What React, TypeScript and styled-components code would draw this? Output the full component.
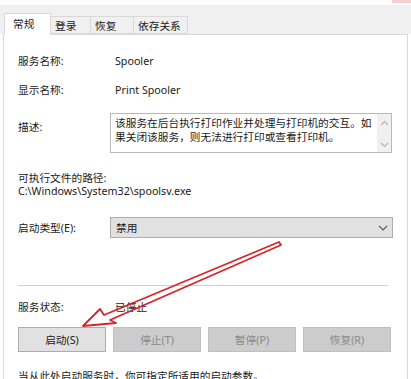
import styled, { createGlobalStyle } from "styled-components";

const GlobalStyle = createGlobalStyle`
  html, body {
    margin: 0;
    padding: 0;
    background: #ffffff;
  }
`;

const FONT = `"Noto Sans", "Noto Sans CJK SC", sans-serif`;

export default function App() {
  return (
    <>
      <GlobalStyle />
      <Page>
        <TopStrip>
          <CloseHint />
        </TopStrip>
        <TabStrip>
          <Tab $active $width={47}>常规</Tab>
          <Tab $width={40}>登录</Tab>
          <Tab $width={43}>恢复</Tab>
          <Tab $width={54}>依存关系</Tab>
        </TabStrip>
        <Panel>
          <Row $top={0}>
            <Label>服务名称:</Label>
            <Value>Spooler</Value>
          </Row>
          <Row $top={15}>
            <Label>显示名称:</Label>
            <Value>Print Spooler</Value>
          </Row>
          <Row $top={16} $alignTop>
            <Label $offset={7}>描述:</Label>
            <TextBox>
              <TextBoxText>
                该服务在后台执行打印作业并处理与打印机的交互。如
                <br />
                果关闭该服务，则无法进行打印或查看打印机。
              </TextBoxText>
              <ScrollBar>
                <svg width="9" height="6" viewBox="0 0 9 6">
                  <polyline points="1,5 4.5,1.5 8,5" fill="none" stroke="#b4b4b4" strokeWidth="1.1" />
                </svg>
                <svg width="9" height="6" viewBox="0 0 9 6">
                  <polyline points="1,1 4.5,4.5 8,1" fill="none" stroke="#b4b4b4" strokeWidth="1.1" />
                </svg>
              </ScrollBar>
            </TextBox>
          </Row>
          <PathLabel>可执行文件的路径:</PathLabel>
          <PathValue>C:\Windows\System32\spoolsv.exe</PathValue>
          <Row $top={19}>
            <Label>启动类型(E):</Label>
            <Select>
              <span>禁用</span>
              <svg width="10" height="6" viewBox="0 0 10 6">
                <polyline points="1,1 5,5 9,1" fill="none" stroke="#5a5a5a" strokeWidth="1.1" />
              </svg>
            </Select>
          </Row>
          <Separator />
          <Row $top={14}>
            <Label>服务状态:</Label>
            <Value>已停止</Value>
          </Row>
          <ButtonRow>
            <Button>启动(S)</Button>
            <Button disabled>停止(T)</Button>
            <Button disabled>暂停(P)</Button>
            <Button disabled>恢复(R)</Button>
          </ButtonRow>
          <Hint>当从此处启动服务时，你可指定所适用的启动参数。</Hint>
        </Panel>
        <ArrowLayer width="411" height="379" viewBox="0 0 411 379">
          <polygon
            points="83,326 100,309 104,315 279,242 281,245 110,320 116,323"
            fill="none"
            stroke="#d8232a"
            strokeWidth="1.8"
            strokeLinejoin="round"
          />
        </ArrowLayer>
      </Page>
    </>
  );
}

const Page = styled.div`
  position: relative;
  width: 411px;
  height: 379px;
  overflow: hidden;
  background: #ffffff;
  font-family: ${FONT};
  font-size: 10.7px;
  color: #1a1a1a;
`;

const TopStrip = styled.div`
  height: 5px;
  display: flex;
  justify-content: flex-end;
`;

const CloseHint = styled.div`
  width: 19px;
  height: 3px;
  background: #f7cfcf;
`;

const TabStrip = styled.div`
  height: 29px;
  display: flex;
  align-items: flex-end;
  padding-left: 4px;
  background: #f0f0f0;
`;

const Tab = styled.div<{ $active?: boolean; $width: number }>`
  position: relative;
  z-index: 1;
  box-sizing: border-box;
  width: ${(p) => p.$width}px;
  height: ${(p) => (p.$active ? 22 : 18)}px;
  margin-bottom: ${(p) => (p.$active ? -1 : 0)}px;
  padding-left: ${(p) => (p.$active ? 8 : 4)}px;
  padding-top: ${(p) => (p.$active ? 3 : 2)}px;
  line-height: 14px;
  white-space: nowrap;
  border: 1px solid #d9d9d9;
  border-left-width: ${(p) => (p.$active ? 1 : 0)}px;
  border-bottom-color: ${(p) => (p.$active ? "#ffffff" : "#d9d9d9")};
  background: ${(p) => (p.$active ? "#ffffff" : "#f0f0f0")};
`;

const Panel = styled.div`
  height: 400px;
  margin: 0 3px;
  padding: 19px 14px 0 14px;
  border: 1px solid #d9d9d9;
  background: #ffffff;
`;

const Row = styled.div<{ $top: number; $alignTop?: boolean }>`
  display: flex;
  align-items: ${(p) => (p.$alignTop ? "flex-start" : "center")};
  margin-top: ${(p) => p.$top}px;
  line-height: 14px;
`;

const Label = styled.div<{ $offset?: number }>`
  width: 92px;
  flex: none;
  white-space: nowrap;
  margin-top: ${(p) => p.$offset ?? 0}px;
`;

const Value = styled.div`
  padding-left: 5px;
  white-space: nowrap;
`;

const TextBox = styled.div`
  box-sizing: border-box;
  width: 282px;
  height: 40px;
  display: flex;
  border: 1px solid #b9b9b9;
  background: #ffffff;
`;

const TextBoxText = styled.div`
  flex: 1;
  padding: 2px 0 0 4px;
  line-height: 14px;
  white-space: nowrap;
  overflow: hidden;
`;

const ScrollBar = styled.div`
  width: 14px;
  display: flex;
  flex-direction: column;
  justify-content: space-between;
  align-items: center;
  padding: 6px 0 4px;
  background: #f0f0f0;
`;

const PathLabel = styled.div`
  margin-top: 19px;
  line-height: 13px;
  white-space: nowrap;
`;

const PathValue = styled.div`
  line-height: 13px;
  white-space: nowrap;
`;

const Select = styled.div`
  box-sizing: border-box;
  width: 283px;
  height: 21px;
  display: flex;
  align-items: center;
  justify-content: space-between;
  padding: 0 4px 0 5px;
  border: 1px solid #adadad;
  background: #e1e1e1;
`;

const Separator = styled.div`
  width: 370px;
  height: 1px;
  margin-top: 47px;
  background: #cfcfcf;
`;

const ButtonRow = styled.div`
  display: flex;
  gap: 7px;
  margin-top: 13px;
`;

const Button = styled.button`
  box-sizing: border-box;
  width: 88px;
  height: 25px;
  padding: 0;
  font-family: ${FONT};
  font-size: 10.7px;
  color: #1a1a1a;
  border: 1px solid #adadad;
  background: #e1e1e1;

  &:disabled {
    color: #8a8a8a;
    border-color: #bfbfbf;
    background: #cccccc;
  }
`;

const Hint = styled.div`
  margin-top: 17px;
  line-height: 14px;
  white-space: nowrap;
`;

const ArrowLayer = styled.svg`
  position: absolute;
  inset: 0;
  pointer-events: none;
`;
